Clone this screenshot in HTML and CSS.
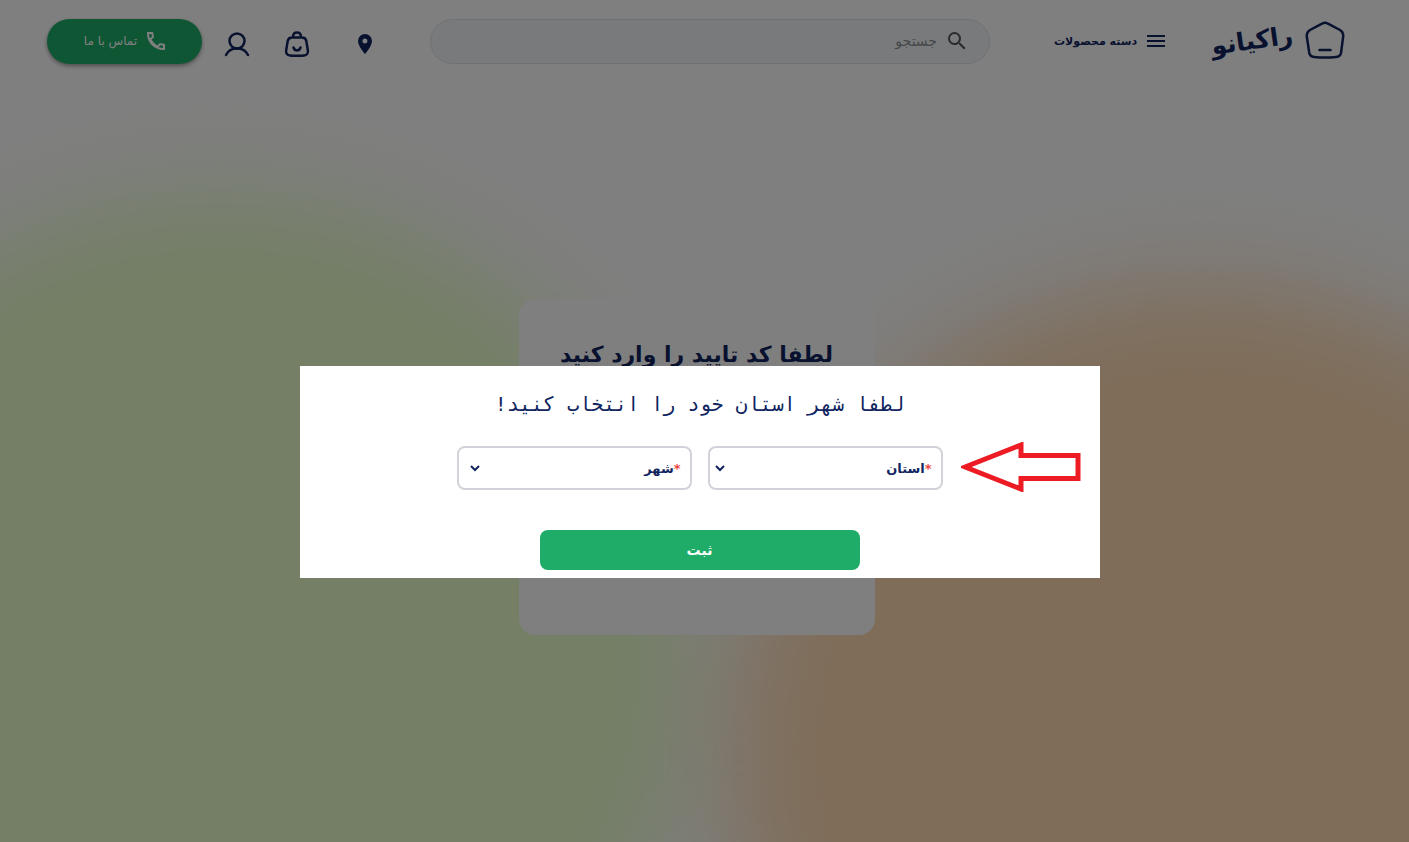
FILE: index.html
```html
<!DOCTYPE html>
<html lang="fa" dir="rtl">
<head>
<meta charset="utf-8">
<meta name="viewport" content="width=device-width, initial-scale=1">
<title>راکیانو</title>
<link rel="stylesheet" href="styles.css">
</head>
<body>
<div class="page">
  <div class="blob blob-green"></div>
  <div class="blob blob-orange"></div>
  <header class="header">
    <a class="logo" href="#">
      <svg class="logo-mark" viewBox="0 0 40 40" aria-hidden="true"><path d="M17 2.700 Q20 .9 23 2.700 L35 9 Q38.500 11 38.200 15.500 L36 32 Q35.300 35.500 31 36 Q20 37.200 9 36 Q5 35.500 4.300 32 L1.800 15.500 Q1.500 11 5 9 Z M14.500 29 H25.500"/></svg>
      <span class="logo-name">راکیانو</span>
    </a>
    <button class="menu" type="button">
      <svg class="icon-menu" viewBox="0 0 18 12" aria-hidden="true"><path d="M0 1H18M0 6H18M0 11H18"/></svg>
      <span>دسته محصولات</span>
    </button>
    <form class="search" role="search">
      <svg class="icon-search" viewBox="0 0 24 24" aria-hidden="true"><path d="M15.500 14h-.79l-.28-.27A6.470 6.470 0 0 0 16 9.500 6.500 6.500 0 1 0 9.500 16c1.610 0 3.090-.59 4.230-1.570l.27.28v.79l5 4.990L20.490 19l-4.990-5zm-6 0C7.010 14 5 11.990 5 9.500S7.010 5 9.500 5 14 7.010 14 9.500 11.990 14 9.500 14z"/></svg>
      <input class="search-input" type="search" placeholder="جستجو" aria-label="جستجو">
    </form>
    <nav class="actions">
      <a href="#" aria-label="موقعیت"><svg class="icon-pin" viewBox="0 0 14 20" aria-hidden="true"><path d="M7 0a7 7 0 0 0-7 7c0 5.250 7 13 7 13s7-7.750 7-13a7 7 0 0 0-7-7zm0 9.500a2.500 2.500 0 1 1 0-5 2.500 2.500 0 0 1 0 5z"/></svg></a>
      <a href="#" aria-label="سبد خرید"><svg class="icon-line" viewBox="0 0 26 26" aria-hidden="true"><path d="M8 6.500H18Q21.500 6.500 22.300 10L23.800 19Q24.500 24 20 24.500Q13 25.200 6 24.500Q1.500 24 2.200 19L3.700 10Q4.500 6.500 8 6.500ZM9 6Q9 1.500 13 1.500T17 6M9.500 16.500Q10.500 19.500 13 19.500T16.500 16.500"/></svg></a>
      <a href="#" aria-label="حساب کاربری"><svg class="icon-line" viewBox="0 0 26 26" aria-hidden="true"><circle cx="13" cy="10" r="7.500"/><path d="M2 24Q5 17.500 13 17.500T24 24"/></svg></a>
    </nav>
    <a class="contact" href="#">
      <svg class="icon-phone" viewBox="0 0 18 18" aria-hidden="true"><path d="M1 1H5.200L6 5L3.200 7.500Q6 12.500 10.500 14.800L13 12L17 12.800V17Q10 17 5.500 12.500T1 1Z"/></svg>
      <span>تماس با ما</span>
    </a>
  </header>
  <main class="content">
    <section class="card"><h1 class="card-title">لطفا کد تایید را وارد کنید</h1></section>
  </main>
</div>
<div class="overlay">
  <section class="modal" role="dialog" aria-modal="true" aria-labelledby="modal-title">
    <h2 class="modal-title" id="modal-title">لطفا شهر استان خود را انتخاب کنید!</h2>
    <form class="form">
      <div class="fields">
        <div class="field">
          <label for="province"><span class="required">*</span>استان</label>
          <select id="province"><option></option></select>
          <svg class="chevron" viewBox="0 0 10 7" aria-hidden="true"><path d="M1 1L5 5L9 1"/></svg>
        </div>
        <div class="field field-city">
          <label for="city"><span class="required">*</span>شهر</label>
          <select id="city"><option></option></select>
          <svg class="chevron" viewBox="0 0 10 7" aria-hidden="true"><path d="M1 1L5 5L9 1"/></svg>
        </div>
      </div>
      <button class="submit" type="button">ثبت</button>
    </form>
    <svg class="arrow" viewBox="0 0 120 50" aria-hidden="true"><path d="M4 25L60 3V13.500H117V36.500H60V47Z"/></svg>
  </section>
</div>
</body>
</html>
```
FILE: styles.css
```css
* { box-sizing: border-box; }
body {
  margin: 0;
  font-family: "DejaVu Sans", sans-serif;
  color: #10255f;
}
a { color: inherit; text-decoration: none; }
button { border: 0; font: inherit; color: inherit; cursor: pointer; }
svg { display: block; flex: none; }

.page {
  position: relative;
  display: flex;
  flex-direction: column;
  min-height: 100vh;
  overflow: hidden;
  background: #fff;
}
.blob {
  position: absolute;
  width: 940px;
  height: 940px;
  border-radius: 50%;
  filter: blur(50px);
}
.blob-green { left: -250px; top: 194px; background: #e8ffca; }
.blob-orange { right: -262px; top: 284px; background: #fedab2; }

.header {
  position: relative;
  display: flex;
  align-items: center;
  height: 82px;
  padding: 0 64px 0 47px;
}
.logo { display: flex; align-items: center; gap: 12px; }
.logo-mark {
  width: 40px;
  height: 40px;
  fill: none;
  stroke: #10255f;
  stroke-width: 2.5;
  stroke-linecap: round;
}
.logo-name {
  font-size: 25px;
  font-weight: 700;
  line-height: 40px;
  transform: rotate(-8deg);
}
.menu {
  display: flex;
  align-items: center;
  gap: 10px;
  margin-right: auto;
  padding: 0;
  background: none;
  font-size: 11px;
  font-weight: 700;
  white-space: nowrap;
}
.icon-menu { width: 18px; height: 12px; stroke: #10255f; stroke-width: 2; }
.search {
  display: flex;
  flex: 0 1 560px;
  align-items: center;
  gap: 8px;
  height: 45px;
  margin-right: 64px;
  padding: 0 20px;
  border: 1px solid #dfe4ea;
  border-radius: 24px;
  background: #f1f4f8;
}
.icon-search { width: 24px; height: 24px; fill: #555; }
.search-input {
  flex: 1;
  min-width: 0;
  padding: 0;
  border: 0;
  outline: 0;
  background: none;
  font: 14px "DejaVu Sans", sans-serif;
}
.search-input::placeholder { color: #8c8f94; }
.actions {
  display: flex;
  align-items: center;
  gap: 34px;
  margin: 6px 58px 0 22px;
}
.icon-pin { width: 14px; height: 20px; margin-left: 14px; fill: #10255f; }
.icon-line {
  width: 26px;
  height: 26px;
  fill: none;
  stroke: #10255f;
  stroke-width: 2.5;
  stroke-linecap: round;
}
.contact {
  display: flex;
  align-items: center;
  justify-content: center;
  gap: 10px;
  width: 155px;
  height: 45px;
  border-radius: 24px;
  background: #1eac68;
  box-shadow: 0 2px 4px rgba(0, 0, 0, 0.4);
  color: #fff;
  font-size: 12px;
  white-space: nowrap;
}
.icon-phone { width: 18px; height: 18px; fill: none; stroke: #fff; stroke-width: 2; }

.content {
  position: relative;
  display: flex;
  justify-content: center;
  padding: 217px 24px 24px 8px;
}
.card {
  width: 356px;
  min-height: 336px;
  padding: 36px 24px;
  border-radius: 16px;
  background: #fff;
  text-align: center;
}
.card-title { margin: 0; font-size: 22px; line-height: 40px; white-space: nowrap; }

.overlay {
  position: fixed;
  inset: 0;
  display: flex;
  align-items: center;
  justify-content: center;
  padding: 102px 10px 0 0;
  background: rgba(0, 0, 0, 0.5);
}
.modal {
  position: relative;
  width: 800px;
  max-width: 100%;
  padding: 24px 24px 8px;
  background: #fff;
}
.modal-title {
  margin: 0 0 28px;
  font: 400 20px/28px "DejaVu Sans Mono", monospace;
  text-align: center;
}
.form { display: flex; flex-direction: column; align-items: center; gap: 40px; }
.fields { display: flex; gap: 16px; }
.field {
  display: flex;
  align-items: center;
  width: 235px;
  height: 44px;
  padding: 0 9px 0 5px;
  border: 2px solid #d2d3da;
  border-radius: 8px;
  font-size: 13px;
  font-weight: 700;
}
.field-city { padding-left: 11px; }
.field select {
  flex: 1;
  min-width: 0;
  height: 100%;
  border: 0;
  outline: 0;
  appearance: none;
  background: none;
}
.required { color: #ef4444; }
.chevron { width: 10px; height: 7px; fill: none; stroke: #10255f; stroke-width: 2; }
.submit {
  width: 320px;
  height: 40px;
  border-radius: 8px;
  background: #1eac68;
  color: #fff;
  font-size: 14px;
  font-weight: 700;
}
.arrow {
  position: absolute;
  top: 76px;
  right: 19px;
  width: 120px;
  height: 50px;
  fill: none;
  stroke: #ed1c24;
  stroke-width: 5;
}
```
